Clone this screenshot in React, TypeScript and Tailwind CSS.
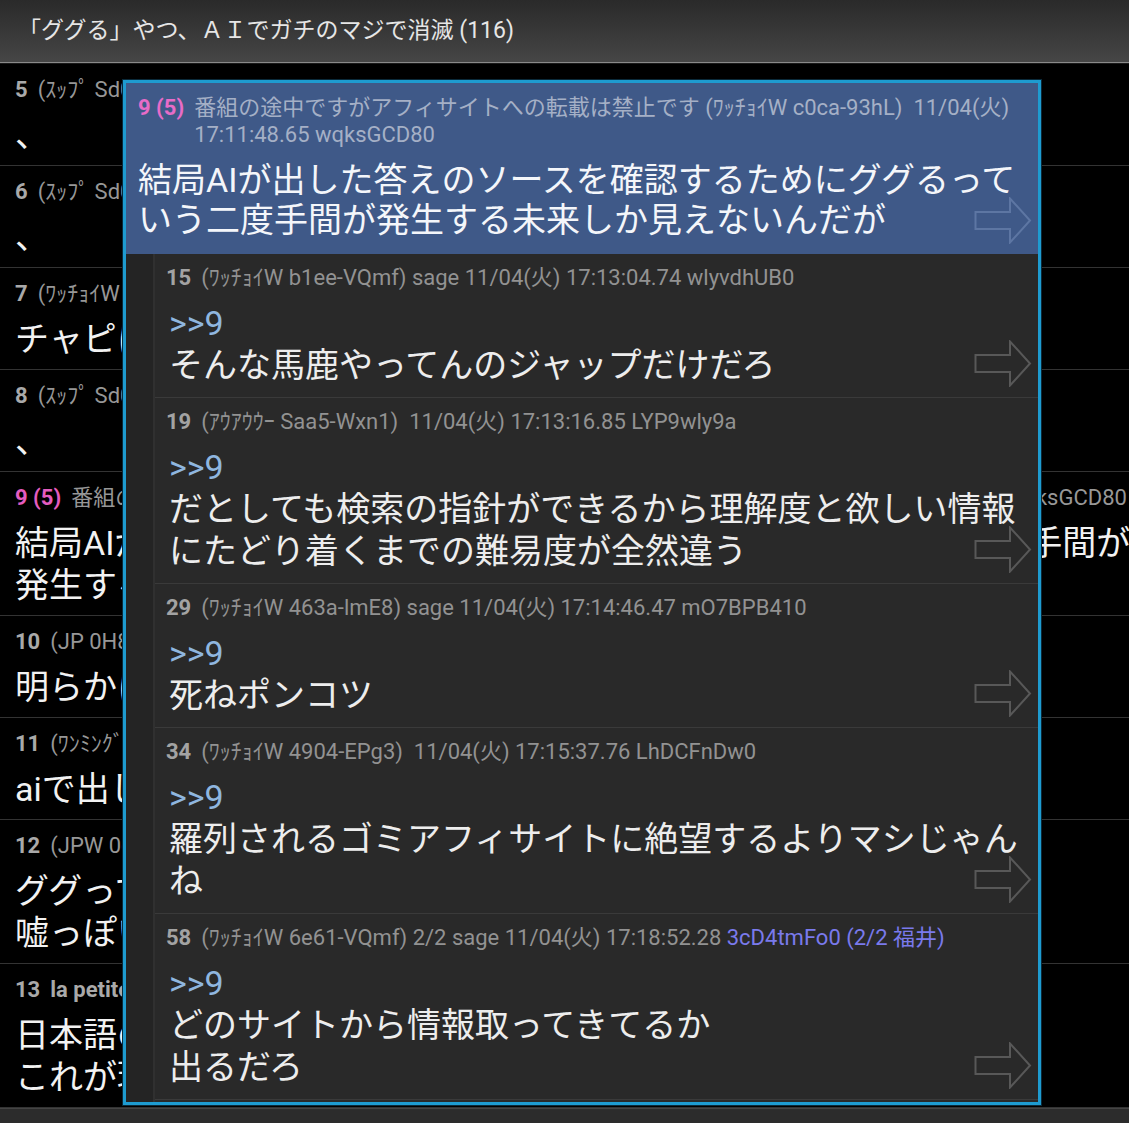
import React from "react";

type BgRow = { no: string; pink?: boolean; meta: string; bold?: boolean; body: string[] };
type Reply = { no: string; meta: string; id?: string; body: string[] };

const bgRows: BgRow[] = [
  { no: "5", meta: "(ｽｯﾌﾟ Sd0a-Vd3K) 11/04(火) 17:10:12.43 Yq8xPm2L0", body: ["、"] },
  { no: "6", meta: "(ｽｯﾌﾟ Sd0a-Vd3K) 11/04(火) 17:10:15.02 Yq8xPm2L0", body: ["、"] },
  { no: "7", meta: "(ﾜｯﾁｮｲW 2b41-Qz7c) 11/04(火) 17:10:31.88 Tn5kRb0Ew", body: ["チャピに聞けば済む話"] },
  { no: "8", meta: "(ｽｯﾌﾟ Sd0a-Vd3K) 11/04(火) 17:10:40.19 Yq8xPm2L0", body: ["、"] },
  {
    no: "9 (5)",
    pink: true,
    meta: "番組の途中ですがアフィサイトへの転載は禁止です (ﾜｯﾁｮｲW c0ca-93hL) 11/04(火) 17:11:48.65 wqksGCD80",
    body: ["結局AIが出した答えのソースを確認するためにググるっていう二度手間が", "発生する未来しか見えないんだが"],
  },
  { no: "10", meta: "(JP 0H8f-Lm2A) 11/04(火) 17:12:03.55 Pq1vXs7Jk", body: ["明らかに精度が落ちてる"] },
  { no: "11", meta: "(ﾜﾝﾐﾝｸﾞT Sa2d-9xRt) 11/04(火) 17:12:20.31 Ke4mNd8Ua", body: ["aiで出した答えは信用できん"] },
  { no: "12", meta: "(JPW 0c5e-Hh3B) 11/04(火) 17:12:41.07 Gf6tLw2Ys", body: ["ググっても上位はアフィばかり", "嘘っぽい記事しか出てこない"] },
  { no: "13", bold: true, meta: "la petite fille 11/04(火) 17:12:58.64 Rb9cVz1Qe", body: ["日本語の検索はもう終わってる", "これが現実"] },
];

const replies: Reply[] = [
  { no: "15", meta: "(ﾜｯﾁｮｲW b1ee-VQmf) sage 11/04(火) 17:13:04.74 wlyvdhUB0", body: ["そんな馬鹿やってんのジャップだけだろ"] },
  {
    no: "19",
    meta: "(ｱｳｱｳｳｰ Saa5-Wxn1)  11/04(火) 17:13:16.85 LYP9wly9a",
    body: ["だとしても検索の指針ができるから理解度と欲しい情報", "にたどり着くまでの難易度が全然違う"],
  },
  { no: "29", meta: "(ﾜｯﾁｮｲW 463a-lmE8) sage 11/04(火) 17:14:46.47 mO7BPB410", body: ["死ねポンコツ"] },
  {
    no: "34",
    meta: "(ﾜｯﾁｮｲW 4904-EPg3)  11/04(火) 17:15:37.76 LhDCFnDw0",
    body: ["羅列されるゴミアフィサイトに絶望するよりマシじゃん", "ね"],
  },
  {
    no: "58",
    meta: "(ﾜｯﾁｮｲW 6e61-VQmf) 2/2 sage 11/04(火) 17:18:52.28 ",
    id: "3cD4tmFo0 (2/2 福井)",
    body: ["どのサイトから情報取ってきてるか", "出るだろ"],
  },
];

function Arrow({ stroke }: { stroke: string }) {
  return (
    <svg width="58" height="47" viewBox="0 0 58 47" fill="none" className="pointer-events-none absolute bottom-[10px] right-[6px]">
      <path d="M1.5 15 H36 V1.5 L56 23.5 L36 45.5 V32 H1.5 Z" stroke={stroke} strokeWidth="2" strokeLinejoin="miter" />
    </svg>
  );
}

function BackgroundRow({ row }: { row: BgRow }) {
  return (
    <div className="border-b border-[#333333] pb-[9px] pl-[15px] pt-[12px]">
      <div className="flex h-[28px] items-center gap-[10px] whitespace-pre text-[22px] leading-[28px]">
        <span className={`font-bold ${row.pink ? "text-[#e45cbf]" : "text-[#a9a9a9]"}`}>{row.no}</span>
        <span className={`${row.bold ? "font-bold text-[#a9a9a9]" : "text-[#979797]"}`}>{row.meta}</span>
      </div>
      <div className="mt-[10px] text-[34px] leading-[42px] text-[#f2f2f2]">
        {row.body.map((line, i) => (
          <div key={i} className="whitespace-pre">{line}</div>
        ))}
      </div>
    </div>
  );
}

function ReplyPost({ reply }: { reply: Reply }) {
  return (
    <div className="relative border-b border-[#3a3a3a] bg-[#292929] pb-[11px] pl-[11px] pt-[10px]">
      <div className="flex h-[28px] items-center gap-[10px] whitespace-pre text-[22px] leading-[28px]">
        <span className="font-bold text-[#a3a3a3]">{reply.no}</span>
        <span className="text-[#929292]">
          {reply.meta}
          {reply.id ? <span className="text-[#7a7aec]">{reply.id}</span> : null}
        </span>
      </div>
      <div className="mt-[10px] pl-[3px] text-[34px] leading-[42px] text-[#ededed]">
        <div className="text-[#8fb6df]">&gt;&gt;9</div>
        {reply.body.map((line, i) => (
          <div key={i} className="whitespace-pre">{line}</div>
        ))}
      </div>
      <Arrow stroke="#585858" />
    </div>
  );
}

export default function App() {
  return (
    <div className="relative h-[1123px] w-[1129px] overflow-hidden bg-black font-['Roboto','Noto_Sans_CJK_JP',sans-serif]">
      <header className="flex h-[62px] items-center bg-gradient-to-b from-[#2a2a2a] to-[#464646] pl-[18px] text-[23px] text-[#e6e6e6]">
        「ググる」やつ、ＡＩでガチのマジで消滅 (116)
      </header>
      <div className="h-px bg-[#8a8a8a]" />
      <div className="h-px bg-[#1a1a1a]" />

      <div className="overflow-hidden">
        {bgRows.map((row) => (
          <BackgroundRow key={row.no} row={row} />
        ))}
      </div>
      <div className="flex h-[40px] items-center justify-center border-t border-[#444] bg-[#2c2c2c] pt-[34px] text-[22px] text-[#d8d8d8]">
        116 まで読んだ
      </div>

      <div className="absolute left-[123px] top-[80px] flex h-[1025px] w-[918px] flex-col overflow-hidden border-[3px] border-[#1e9bd0] bg-[#262626] shadow-[0_0_0_1px_#0a2a3a]">
        <div className="relative shrink-0 bg-[#3f5988] pb-[14px] pl-[12px] pr-[6px] pt-[11px]">
          <div className="flex gap-[10px] text-[22px] leading-[27px]">
            <span className="shrink-0 font-bold text-[#e86cc8]">9 (5)</span>
            <div className="whitespace-pre text-[#a5b0c6]">
              <div>番組の途中ですがアフィサイトへの転載は禁止です (ﾜｯﾁｮｲW c0ca-93hL)  11/04(火)</div>
              <div>17:11:48.65 wqksGCD80</div>
            </div>
          </div>
          <div className="mt-[12px] text-[34px] leading-[40px] text-[#f4f6fa]">
            <div className="whitespace-pre">結局AIが出した答えのソースを確認するためにググるって</div>
            <div className="whitespace-pre">いう二度手間が発生する未来しか見えないんだが</div>
          </div>
          <Arrow stroke="#5d76a3" />
        </div>
        <div className="flex min-h-0 flex-1">
          <div className="w-[29px] shrink-0 border-r-2 border-[#303030] bg-[#242424]" />
          <div className="min-w-0 flex-1 bg-[#292929]">
            {replies.map((reply) => (
              <ReplyPost key={reply.no} reply={reply} />
            ))}
          </div>
        </div>
      </div>
    </div>
  );
}
